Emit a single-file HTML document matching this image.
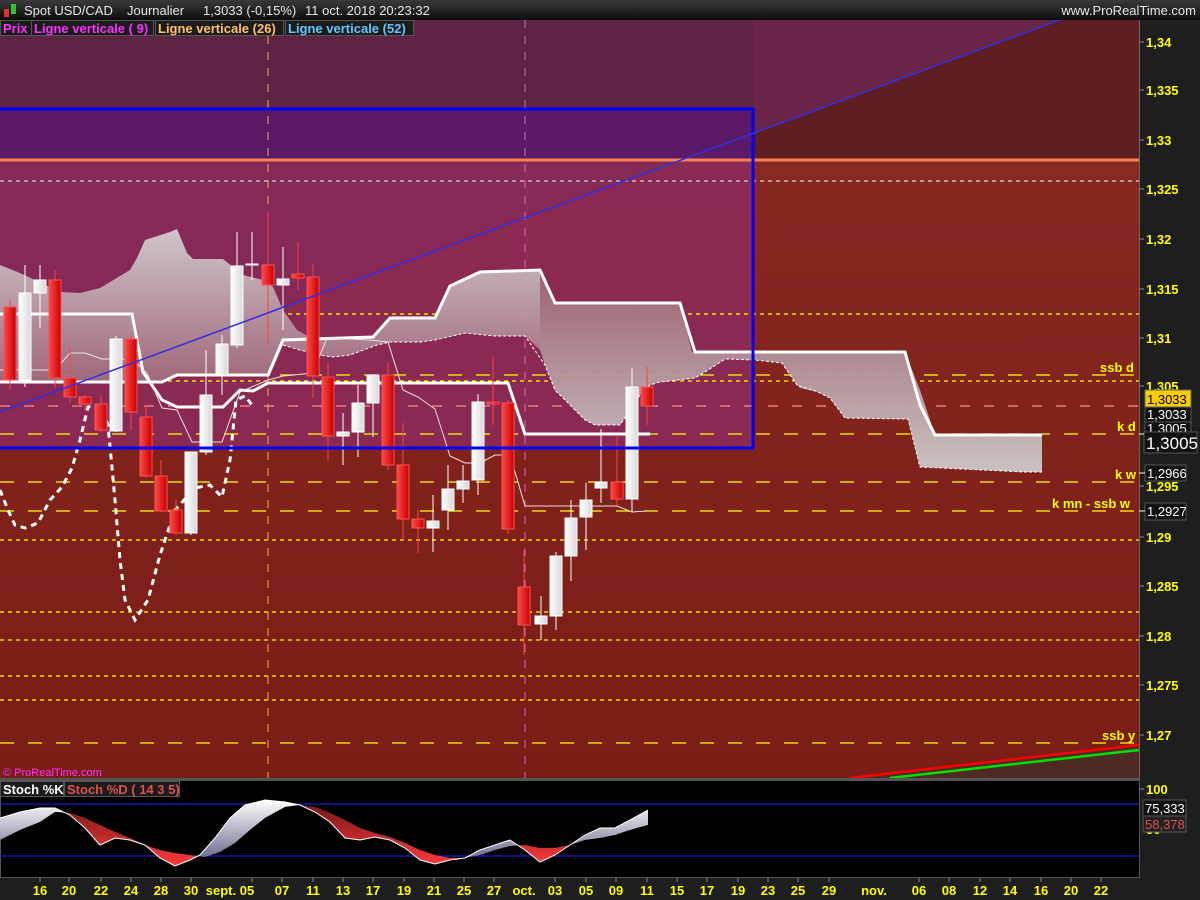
<!DOCTYPE html>
<html><head><meta charset="utf-8"><style>
html,body{margin:0;padding:0;background:#1e1e1e;width:1200px;height:900px;overflow:hidden}
svg{display:block}
text{font-family:"Liberation Sans",Arial,sans-serif}
.y{fill:#ffff00;font-weight:bold;font-size:13px}
.ax{fill:#ffff00;font-weight:bold;font-size:13px}
</style></head><body>
<svg width="1200" height="900" viewBox="0 0 1200 900" xmlns="http://www.w3.org/2000/svg">
<defs>
<linearGradient id="hdr" x1="0" y1="0" x2="0" y2="1"><stop offset="0" stop-color="#3a3a3a"/><stop offset="1" stop-color="#0c0c0c"/></linearGradient>
<linearGradient id="bg" x1="0" y1="0" x2="0" y2="1"><stop offset="0" stop-color="#8a2a24"/><stop offset="1" stop-color="#7a1d15"/></linearGradient>
<linearGradient id="cl1" gradientUnits="userSpaceOnUse" x1="0" y1="230" x2="0" y2="385"><stop offset="0" stop-color="#d2cdcf"/><stop offset="1" stop-color="#a0687c"/></linearGradient>
<linearGradient id="cl2" gradientUnits="userSpaceOnUse" x1="0" y1="270" x2="0" y2="472"><stop offset="0" stop-color="#9c6472"/><stop offset="1" stop-color="#cecaca"/></linearGradient>
<linearGradient id="rc" x1="0" y1="0" x2="1" y2="0"><stop offset="0" stop-color="#ff4848"/><stop offset="1" stop-color="#c80000"/></linearGradient>
<linearGradient id="wc" x1="0" y1="0" x2="1" y2="0"><stop offset="0" stop-color="#ffffff"/><stop offset="1" stop-color="#d8d8d8"/></linearGradient>
<linearGradient id="kw" gradientUnits="userSpaceOnUse" x1="0" y1="800" x2="0" y2="866"><stop offset="0" stop-color="#ffffff"/><stop offset="1" stop-color="#5a5a80"/></linearGradient>
<linearGradient id="dr" gradientUnits="userSpaceOnUse" x1="0" y1="805" x2="0" y2="866"><stop offset="0" stop-color="#7a1818"/><stop offset="1" stop-color="#ff3a3a"/></linearGradient>
<clipPath id="ca"><polygon points="0,780 0,840 20,830 40,822 55,812 70,813 85,818 100,825 115,832 130,838 145,845 160,850 175,853 190,855 205,857 220,852 235,843 250,830 265,818 285,807 300,805 315,807 330,813 345,820 360,828 375,833 390,837 405,843 420,850 435,855 450,858 465,858 480,855 495,850 510,846 525,845 540,848 555,848 570,845 585,840 600,838 615,835 630,830 648,825 648,780"/></clipPath>
<clipPath id="cb"><polygon points="0,880 0,840 20,830 40,822 55,812 70,813 85,818 100,825 115,832 130,838 145,845 160,850 175,853 190,855 205,857 220,852 235,843 250,830 265,818 285,807 300,805 315,807 330,813 345,820 360,828 375,833 390,837 405,843 420,850 435,855 450,858 465,858 480,855 495,850 510,846 525,845 540,848 555,848 570,845 585,840 600,838 615,835 630,830 648,825 648,880"/></clipPath>
<clipPath id="main"><rect x="0" y="20" width="1139" height="758"/></clipPath>
</defs>

<rect x="0" y="0" width="1200" height="20" fill="url(#hdr)"/>
<rect x="4" y="9" width="5" height="8" fill="#e03030"/><rect x="11" y="4" width="5" height="10" fill="#30c030"/>
<text x="24" y="15" fill="#e6e6e6" font-size="13">Spot USD/CAD</text>
<text x="127" y="15" fill="#e6e6e6" font-size="13">Journalier</text>
<text x="203" y="15" fill="#e6e6e6" font-size="13">1,3033 (-0,15%)</text>
<text x="305" y="15" fill="#e6e6e6" font-size="13">11 oct. 2018 20:23:32</text>
<text x="1196" y="15" fill="#e6e6e6" font-size="13" text-anchor="end">www.ProRealTime.com</text>

<g clip-path="url(#main)">
<rect x="0" y="20" width="1139" height="758" fill="url(#bg)"/>
<rect x="0" y="20" width="1139" height="140" fill="#5f1f22"/>
<polygon points="0,20 1060,20 0,412" fill="#6a2448"/>
<rect x="0" y="20" width="753" height="89" fill="#5e2444"/>
<rect x="0" y="109" width="753" height="51" fill="#5a1a68"/>
<rect x="0" y="160" width="753" height="288" fill="#8c2a5a" opacity="0.85"/>
<polygon points="850,778 1139,745 1139,778" fill="#4e2a22"/>

<g stroke-width="1.2" fill="none">
<line x1="0" y1="181" x2="1139" y2="181" stroke="#e0d0d0" stroke-dasharray="4,4"/>
<line x1="0" y1="314" x2="1139" y2="314" stroke="#ffff00" stroke-dasharray="4,4"/>
<line x1="0" y1="375" x2="1139" y2="375" stroke="#ffff00" stroke-dasharray="14,14"/>
<line x1="0" y1="381" x2="1139" y2="381" stroke="#ffff00" stroke-dasharray="4,4"/>
<line x1="0" y1="406" x2="1139" y2="406" stroke="#ff9090" stroke-dasharray="10,14"/>
<line x1="0" y1="434" x2="1139" y2="434" stroke="#ffff00" stroke-dasharray="14,14"/>
<line x1="0" y1="482" x2="1139" y2="482" stroke="#ffff00" stroke-dasharray="14,14"/>
<line x1="0" y1="511" x2="1139" y2="511" stroke="#ffff00" stroke-dasharray="14,14"/>
<line x1="0" y1="540" x2="1139" y2="540" stroke="#ffff00" stroke-dasharray="4,4"/>
<line x1="0" y1="612" x2="1139" y2="612" stroke="#ffff00" stroke-dasharray="4,4"/>
<line x1="0" y1="640" x2="1139" y2="640" stroke="#ffff00" stroke-dasharray="4,4"/>
<line x1="0" y1="676" x2="1139" y2="676" stroke="#ffff00" stroke-dasharray="4,4"/>
<line x1="0" y1="700" x2="1139" y2="700" stroke="#ffff00" stroke-dasharray="4,4"/>
<line x1="0" y1="743" x2="1139" y2="743" stroke="#ffff00" stroke-dasharray="14,14"/>
</g>
<line x1="0" y1="160" x2="1139" y2="160" stroke="#ff7f50" stroke-width="3"/>
<line x1="268" y1="20" x2="268" y2="778" stroke="#f0b040" stroke-dasharray="8,8" stroke-width="1"/>
<line x1="525" y1="20" x2="525" y2="778" stroke="#e060c0" stroke-dasharray="8,8" stroke-width="1"/>

<polygon fill="url(#cl1)" opacity="0.95" points="0,265 20,273 60,292 80,293 100,288 130,270 137,258 145,240 170,232 177,229 187,253 193,259 223,259 243,275 263,280 273,287 283,310 297,330 315,340 373,337 390,318 435,318 450,286 480,272 540,270 540,350 525,336 495,336 465,333 435,340 420,342 390,342 377,345 350,355 333,357 320,355 300,350 283,345 270,376 177,376 162,382 0,382"/>
<polygon fill="url(#cl2)" opacity="0.95" points="540,270 555,303 680,303 692,352 905,352 920,390 935,435 1042,435 1042,472 1025,472 920,467 908,419 845,418 830,398 818,392 800,388 797,385 782,363 755,360 725,359 708,370 695,378 660,382 650,385 640,395 620,425 595,425 585,420 570,405 555,390 545,365 540,350"/>
<polyline fill="none" stroke="#fff" stroke-width="1" stroke-dasharray="3,2" points="283,345 300,350 320,355 333,357 350,355 377,345 390,342 420,342 435,340 465,333 495,336 525,336 545,365 555,390 570,405 585,420 595,425 620,425 640,395 650,385 660,382 695,378 708,370 725,359 755,360 782,363 797,385 818,392 830,398 845,418 908,419 920,467 1025,472 1042,472"/>

<polyline fill="none" stroke="#fff" stroke-width="3" points="0,314 132,314 143,372 162,400 177,407 223,407 240,390 253,391 268,383 508,383 525,434 650,434"/>
<polyline fill="none" stroke="#fff" stroke-width="3" points="0,382 162,382 177,375 268,375 283,340 373,337 390,318 435,318 450,286 480,272 540,270 555,303 680,303 695,352 905,352 920,405 935,435 1042,435"/>
<polyline fill="none" stroke="#f0e0e0" stroke-width="1" points="0,370 55,370 70,353 85,353 102,359 132,359 147,373 162,408 177,410 192,442 222,442 240,392 268,380 283,376 313,373 327,338 370,340 388,342 403,390 418,397 435,409 450,456 465,463 480,463 495,455 510,455 525,506 617,506 632,512 647,511"/>
<polyline fill="none" stroke="#fff" stroke-width="3" stroke-dasharray="6,5" points="0,490 8,510 15,525 25,528 38,523 50,500 62,487 72,468 80,440 88,407 100,405 108,425 115,500 120,560 125,600 135,620 148,600 160,555 175,510 195,488 210,485 222,497 230,460 236,400 245,396 252,405"/>

<g stroke-width="1">
<g stroke="#ff4040">
<line x1="10" y1="300" x2="10" y2="390"/><line x1="55" y1="270" x2="55" y2="388"/><line x1="70" y1="347" x2="70" y2="403"/><line x1="85" y1="395" x2="85" y2="410"/><line x1="101" y1="395" x2="101" y2="432"/><line x1="131" y1="336" x2="131" y2="430"/><line x1="146" y1="405" x2="146" y2="478"/><line x1="161" y1="460" x2="161" y2="512"/><line x1="176" y1="500" x2="176" y2="535"/><line x1="268" y1="212" x2="268" y2="345"/><line x1="298" y1="242" x2="298" y2="290"/><line x1="313" y1="264" x2="313" y2="398"/><line x1="328" y1="363" x2="328" y2="460"/><line x1="388" y1="363" x2="388" y2="470"/><line x1="403" y1="423" x2="403" y2="539"/><line x1="418" y1="510" x2="418" y2="553"/><line x1="493" y1="357" x2="493" y2="425"/><line x1="508" y1="400" x2="508" y2="534"/><line x1="524" y1="550" x2="524" y2="655"/><line x1="617" y1="435" x2="617" y2="505"/><line x1="647" y1="367" x2="647" y2="425"/>
</g>
<g stroke="#fff">
<line x1="25" y1="265" x2="25" y2="387"/><line x1="40" y1="265" x2="40" y2="328"/><line x1="116" y1="336" x2="116" y2="432"/><line x1="191" y1="452" x2="191" y2="535"/><line x1="206" y1="350" x2="206" y2="455"/><line x1="222" y1="335" x2="222" y2="395"/><line x1="237" y1="232" x2="237" y2="348"/><line x1="252" y1="232" x2="252" y2="280"/><line x1="283" y1="247" x2="283" y2="330"/><line x1="343" y1="413" x2="343" y2="465"/><line x1="358" y1="385" x2="358" y2="457"/><line x1="373" y1="375" x2="373" y2="437"/><line x1="433" y1="495" x2="433" y2="552"/><line x1="448" y1="465" x2="448" y2="530"/><line x1="463" y1="465" x2="463" y2="503"/><line x1="478" y1="394" x2="478" y2="495"/><line x1="541" y1="596" x2="541" y2="640"/><line x1="556" y1="552" x2="556" y2="630"/><line x1="571" y1="500" x2="571" y2="581"/><line x1="586" y1="483" x2="586" y2="550"/><line x1="601" y1="429" x2="601" y2="503"/><line x1="632" y1="368" x2="632" y2="512"/>
</g>
<g fill="url(#rc)" stroke="#ff5050">
<rect x="4" y="307" width="12" height="73"/><rect x="49" y="280" width="12" height="98"/><rect x="64" y="378" width="12" height="19"/><rect x="79" y="397" width="12" height="7"/><rect x="95" y="404" width="12" height="26"/><rect x="125" y="339" width="12" height="73"/><rect x="140" y="417" width="12" height="59"/><rect x="155" y="476" width="12" height="35"/><rect x="170" y="510" width="12" height="23"/><rect x="262" y="265" width="12" height="20"/><rect x="292" y="274" width="12" height="4"/><rect x="307" y="277" width="12" height="99"/><rect x="322" y="377" width="12" height="59"/><rect x="382" y="375" width="12" height="90"/><rect x="397" y="465" width="12" height="54"/><rect x="412" y="519" width="12" height="9"/><rect x="487" y="402" width="12" height="2"/><rect x="502" y="403" width="12" height="126"/><rect x="518" y="587" width="12" height="38"/><rect x="611" y="482" width="12" height="17"/><rect x="641" y="387" width="12" height="19"/>
</g>
<g fill="url(#wc)" stroke="#fff">
<rect x="19" y="293" width="12" height="87"/><rect x="34" y="280" width="12" height="13"/><rect x="110" y="339" width="12" height="92"/><rect x="185" y="452" width="12" height="81"/><rect x="200" y="395" width="12" height="57"/><rect x="216" y="344" width="12" height="31"/><rect x="231" y="266" width="12" height="79"/><rect x="246" y="264" width="12" height="1"/><rect x="277" y="279" width="12" height="6"/><rect x="337" y="432" width="12" height="4"/><rect x="352" y="403" width="12" height="29"/><rect x="367" y="375" width="12" height="28"/><rect x="427" y="521" width="12" height="7"/><rect x="442" y="489" width="12" height="21"/><rect x="457" y="481" width="12" height="8"/><rect x="472" y="402" width="12" height="78"/><rect x="535" y="616" width="12" height="8"/><rect x="550" y="556" width="12" height="60"/><rect x="565" y="518" width="12" height="38"/><rect x="580" y="500" width="12" height="17"/><rect x="595" y="482" width="12" height="6"/><rect x="626" y="387" width="12" height="112"/>
</g>
</g>

<rect x="-2" y="109" width="755" height="339" fill="none" stroke="#0000ff" stroke-width="3"/>
<line x1="0" y1="412" x2="1065" y2="18" stroke="#3030e0" stroke-width="1.5"/>
<line x1="850" y1="778" x2="1139" y2="745" stroke="#ff0000" stroke-width="2.5"/>
<line x1="890" y1="778" x2="1139" y2="750" stroke="#00e000" stroke-width="2.5"/>

<text class="y" x="1100" y="372">ssb d</text>
<text class="y" x="1117" y="431">k d</text>
<text class="y" x="1115" y="479">k w</text>
<text class="y" x="1052" y="508">k mn - ssb w</text>
<text class="y" x="1102" y="740">ssb y</text>
<text x="3" y="776" fill="#ff30ff" font-size="11">© ProRealTime.com</text>
</g>

<rect x="0" y="20" width="413" height="16" fill="#1c1c1c"/>
<g stroke="#555" fill="none"><rect x="0.5" y="20.5" width="31" height="15"/><rect x="31.5" y="20.5" width="122" height="15"/><rect x="155.5" y="20.5" width="128" height="15"/><rect x="285.5" y="20.5" width="128" height="15"/></g>
<text x="3" y="33" fill="#ff30ff" font-size="13" font-weight="bold">Prix</text>
<text x="34" y="33" fill="#ff30ff" font-size="13" font-weight="bold">Ligne verticale ( 9)</text>
<text x="158" y="33" fill="#ffc060" font-size="13" font-weight="bold">Ligne verticale (26)</text>
<text x="288" y="33" fill="#60c8ff" font-size="13" font-weight="bold">Ligne verticale (52)</text>

<rect x="1139" y="20" width="61" height="880" fill="#1e1e1e"/>
<line x1="1139.5" y1="20" x2="1139.5" y2="878" stroke="#666"/>
<g class="y">
<text x="1146" y="47">1,34</text><text x="1146" y="95">1,335</text><text x="1146" y="145">1,33</text><text x="1146" y="194">1,325</text><text x="1146" y="244">1,32</text><text x="1146" y="294">1,315</text><text x="1146" y="343">1,31</text><text x="1146" y="391">1,305</text><text x="1146" y="491">1,295</text><text x="1146" y="542">1,29</text><text x="1146" y="591">1,285</text><text x="1146" y="641">1,28</text><text x="1146" y="690">1,275</text><text x="1146" y="740">1,27</text>
</g>
<g stroke="#888"><line x1="1139" y1="42" x2="1144" y2="42"/><line x1="1139" y1="90" x2="1144" y2="90"/><line x1="1139" y1="140" x2="1144" y2="140"/><line x1="1139" y1="189" x2="1144" y2="189"/><line x1="1139" y1="239" x2="1144" y2="239"/><line x1="1139" y1="289" x2="1144" y2="289"/><line x1="1139" y1="338" x2="1144" y2="338"/><line x1="1139" y1="386" x2="1144" y2="386"/><line x1="1139" y1="486" x2="1144" y2="486"/><line x1="1139" y1="537" x2="1144" y2="537"/><line x1="1139" y1="586" x2="1144" y2="586"/><line x1="1139" y1="636" x2="1144" y2="636"/><line x1="1139" y1="685" x2="1144" y2="685"/><line x1="1139" y1="735" x2="1144" y2="735"/></g>
<rect x="1145" y="420" width="46" height="16" fill="#111" stroke="#555"/><text x="1147" y="433" fill="#fff" font-size="13">1,3005</text>
<rect x="1145" y="405" width="46" height="17" fill="#111" stroke="#555"/><text x="1147" y="419" fill="#fff" font-size="13">1,3033</text>
<rect x="1145" y="390" width="46" height="17" fill="#ffcc00" stroke="#666"/><text x="1147" y="404" fill="#000" font-size="13">1,3033</text>
<rect x="1144" y="432" width="53" height="21" fill="#111" stroke="#555"/><text x="1146" y="449" fill="#fff" font-size="17">1,3005</text>
<rect x="1145" y="465" width="41" height="16" fill="#111" stroke="#555"/><text x="1147" y="478" fill="#fff" font-size="13">1,2966</text>
<rect x="1145" y="503" width="41" height="17" fill="#111" stroke="#555"/><text x="1147" y="516" fill="#fff" font-size="13">1,2927</text>
<line x1="1139" y1="434" x2="1144" y2="434" stroke="#fff"/><line x1="1139" y1="473" x2="1145" y2="473" stroke="#fff"/><line x1="1139" y1="511" x2="1145" y2="511" stroke="#fff"/>

<rect x="0" y="778" width="1139" height="2" fill="#555"/>
<rect x="0" y="780" width="1139" height="98" fill="#000"/>
<rect x="0.5" y="780.5" width="1139" height="97" fill="none" stroke="#555"/>
<line x1="0" y1="804" x2="1139" y2="804" stroke="#2020ff"/>
<line x1="0" y1="856" x2="1139" y2="856" stroke="#2020ff"/>
<polygon clip-path="url(#ca)" fill="url(#kw)" points="0,818 20,812 40,808 55,808 70,815 85,828 100,845 115,838 130,840 145,845 160,858 175,866 190,860 200,855 215,838 230,818 245,805 265,800 285,802 300,805 315,812 330,822 345,838 360,840 375,837 390,840 405,848 420,860 435,864 450,860 465,858 480,850 495,845 510,840 525,850 540,862 555,855 570,845 585,835 600,828 615,828 630,820 648,810 648,825 630,830 615,835 600,838 585,840 570,845 555,848 540,848 525,845 510,846 495,850 480,855 465,858 450,858 435,855 420,850 405,843 390,837 375,833 360,828 345,820 330,813 315,807 300,805 285,807 265,818 250,830 235,843 220,852 205,857 190,855 175,853 160,850 145,845 130,838 115,832 100,825 85,818 70,813 55,812 40,822 20,830 0,840"/>
<polygon clip-path="url(#cb)" fill="url(#dr)" points="0,818 20,812 40,808 55,808 70,815 85,828 100,845 115,838 130,840 145,845 160,858 175,866 190,860 200,855 215,838 230,818 245,805 265,800 285,802 300,805 315,812 330,822 345,838 360,840 375,837 390,840 405,848 420,860 435,864 450,860 465,858 480,850 495,845 510,840 525,850 540,862 555,855 570,845 585,835 600,828 615,828 630,820 648,810 648,825 630,830 615,835 600,838 585,840 570,845 555,848 540,848 525,845 510,846 495,850 480,855 465,858 450,858 435,855 420,850 405,843 390,837 375,833 360,828 345,820 330,813 315,807 300,805 285,807 265,818 250,830 235,843 220,852 205,857 190,855 175,853 160,850 145,845 130,838 115,832 100,825 85,818 70,813 55,812 40,822 20,830 0,840"/>
<polyline fill="none" stroke="#fff" stroke-width="1" points="0,818 20,812 40,808 55,808 70,815 85,828 100,845 115,838 130,840 145,845 160,858 175,866 190,860 200,855 215,838 230,818 245,805 265,800 285,802 300,805 315,812 330,822 345,838 360,840 375,837 390,840 405,848 420,860 435,864 450,860 465,858 480,850 495,845 510,840 525,850 540,862 555,855 570,845 585,835 600,828 615,828 630,820 648,810"/>
<rect x="0" y="781" width="180" height="16" fill="#1c1c1c"/>
<rect x="0.5" y="781.5" width="63" height="15" fill="none" stroke="#555"/><rect x="64.5" y="781.5" width="115" height="15" fill="none" stroke="#555"/>
<text x="3" y="794" fill="#fff" font-size="13" font-weight="bold">Stoch %K</text>
<text x="67" y="794" fill="#e05050" font-size="13" font-weight="bold">Stoch %D ( 14 3 5)</text>
<text class="y" x="1146" y="794">100</text>
<line x1="1139" y1="789" x2="1144" y2="789" stroke="#888"/>
<text class="y" x="1146" y="834">50</text>
<rect x="1143" y="800" width="43" height="16" fill="#111" stroke="#555"/><text x="1145" y="813" fill="#fff" font-size="13">75,333</text>
<rect x="1143" y="816" width="43" height="16" fill="#222" stroke="#555"/><text x="1145" y="829" fill="#e05050" font-size="13">58,378</text>

<rect x="0" y="878" width="1139" height="22" fill="#1e1e1e"/>
<g stroke="#888">
<line x1="40" y1="878" x2="40" y2="882"/><line x1="69" y1="878" x2="69" y2="882"/><line x1="101" y1="878" x2="101" y2="882"/><line x1="131" y1="878" x2="131" y2="882"/><line x1="161" y1="878" x2="161" y2="882"/><line x1="191" y1="878" x2="191" y2="882"/><line x1="252" y1="878" x2="252" y2="882"/><line x1="282" y1="878" x2="282" y2="882"/><line x1="313" y1="878" x2="313" y2="882"/><line x1="343" y1="878" x2="343" y2="882"/><line x1="373" y1="878" x2="373" y2="882"/><line x1="404" y1="878" x2="404" y2="882"/><line x1="434" y1="878" x2="434" y2="882"/><line x1="464" y1="878" x2="464" y2="882"/><line x1="494" y1="878" x2="494" y2="882"/><line x1="555" y1="878" x2="555" y2="882"/><line x1="586" y1="878" x2="586" y2="882"/><line x1="616" y1="878" x2="616" y2="882"/><line x1="647" y1="878" x2="647" y2="882"/><line x1="677" y1="878" x2="677" y2="882"/><line x1="707" y1="878" x2="707" y2="882"/><line x1="738" y1="878" x2="738" y2="882"/><line x1="768" y1="878" x2="768" y2="882"/><line x1="798" y1="878" x2="798" y2="882"/><line x1="829" y1="878" x2="829" y2="882"/><line x1="919" y1="878" x2="919" y2="882"/><line x1="949" y1="878" x2="949" y2="882"/><line x1="980" y1="878" x2="980" y2="882"/><line x1="1010" y1="878" x2="1010" y2="882"/><line x1="1041" y1="878" x2="1041" y2="882"/><line x1="1071" y1="878" x2="1071" y2="882"/><line x1="1101" y1="878" x2="1101" y2="882"/>
</g>
<g class="ax" text-anchor="middle">
<text x="40" y="895">16</text><text x="69" y="895">20</text><text x="101" y="895">22</text><text x="131" y="895">24</text><text x="161" y="895">28</text><text x="191" y="895">30</text><text x="230" y="895">sept. 05</text><text x="282" y="895">07</text><text x="313" y="895">11</text><text x="343" y="895">13</text><text x="373" y="895">17</text><text x="404" y="895">19</text><text x="434" y="895">21</text><text x="464" y="895">25</text><text x="494" y="895">27</text><text x="524" y="895">oct.</text><text x="555" y="895">03</text><text x="586" y="895">05</text><text x="616" y="895">09</text><text x="647" y="895">11</text><text x="677" y="895">15</text><text x="707" y="895">17</text><text x="738" y="895">19</text><text x="768" y="895">23</text><text x="798" y="895">25</text><text x="829" y="895">29</text><text x="874" y="895">nov.</text><text x="919" y="895">06</text><text x="949" y="895">08</text><text x="980" y="895">12</text><text x="1010" y="895">14</text><text x="1041" y="895">16</text><text x="1071" y="895">20</text><text x="1101" y="895">22</text>
</g>
</svg>
</body></html>
